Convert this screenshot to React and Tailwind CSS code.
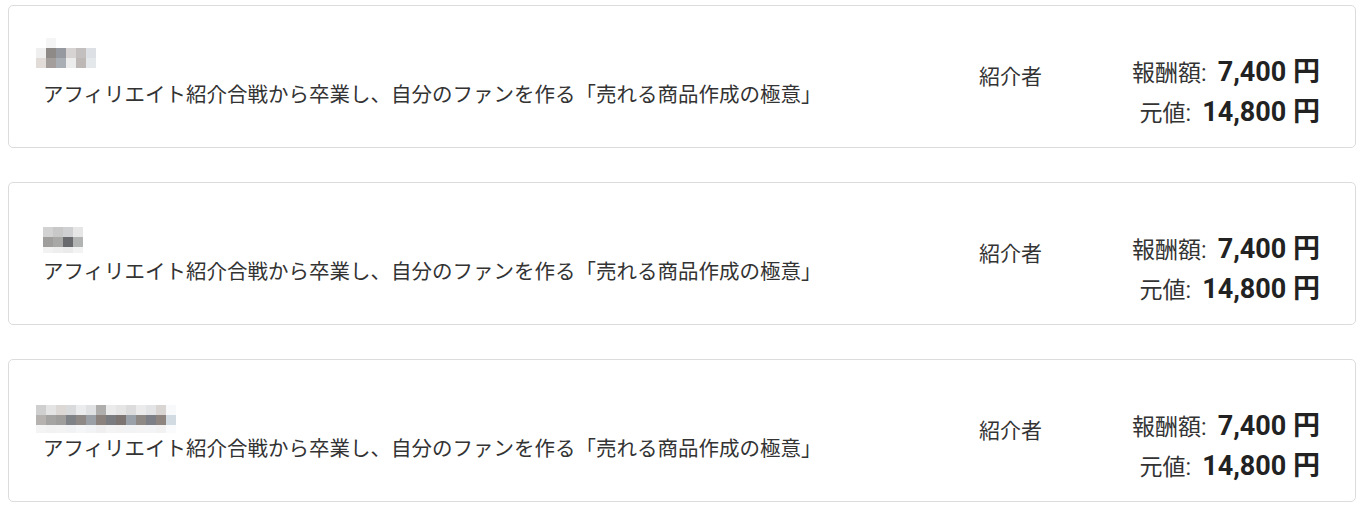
import React from "react";

const TITLE = "アフィリエイト紹介合戦から卒業し、自分のファンを作る「売れる商品作成の極意」";

function Mosaic({ rows, size = 10 }) {
  const width = Math.max(...rows.map((r) => r.cells.length + (r.offset || 0))) * size;
  const height = rows.reduce((s, r) => s + r.h, 0);
  let y = 0;
  return (
    <svg width={width} height={height} viewBox={`0 0 ${width} ${height}`} className="block">
      {rows.map((r, ri) => {
        const top = y;
        y += r.h;
        return r.cells.map((c, ci) =>
          c ? (
            <rect key={`${ri}-${ci}`} x={((r.offset || 0) + ci) * size} y={top} width={size} height={r.h} fill={c} />
          ) : null
        );
      })}
    </svg>
  );
}

const cards = [
  {
    mosaicClass: "mt-[32px] ml-0",
    rows: [
      { h: 10, cells: [null, "#f5f5f5"] },
      { h: 10, cells: ["#f0efef", "#8e8a88", "#969aa0", "#d6d3d2", "#c3bfbe", "#dde1e5"] },
      { h: 10, cells: ["#e2dcd8", "#a39e9b", "#a9aeb5", "#ececec", "#bdb8b6", "#e5e8ea"] },
    ],
    textClass: "mt-[9px]",
  },
  {
    mosaicClass: "mt-[44px] ml-[7px]",
    rows: [
      { h: 10, cells: ["#d2d2d2", "#c8c8c8", "#cfd0d2", "#e6e6e6"] },
      { h: 10, cells: ["#a09e9c", "#a8a8a6", "#686a6e", "#b2b3b3"] },
      { h: 6, cells: ["#f2f2f2", "#eeeeee", "#ebebeb", "#f3f3f3"] },
    ],
    textClass: "mt-[1px]",
  },
  {
    mosaicClass: "mt-[45px] ml-0",
    rows: [
      {
        h: 10,
        cells: ["#cfcfcf", "#e4e4e4", "#dcd8d6", "#d8dadc", "#eaecee", "#dfe1e3", "#b0aeac", "#ebebeb", "#e5e5e5", "#dcdcdc", "#ebebeb", "#e2e4e6", "#d8d5d3", "#f7f9fb"],
      },
      {
        h: 10,
        cells: ["#b6b2b0", "#a6a4a2", "#9f9e9c", "#7f8388", "#8e8986", "#9aa0a6", "#8b827d", "#7a7c80", "#7c7571", "#9aa1a8", "#8e8985", "#7d8187", "#8f8580", "#d3dbe2"],
      },
      {
        h: 8,
        cells: ["#f4f4f4", "#f2f2f2", "#f3f3f3", "#f1f2f3", "#f5f6f7", "#f2f3f4", "#efefef", "#f4f4f4", "#f3f3f3", "#f2f3f4", "#f4f4f4", "#f3f4f5", "#f2f2f2", "#fafbfc"],
      },
    ],
    textClass: "mt-[-2px]",
  },
];

function Card({ c }) {
  return (
    <div className="box-border flex h-[143px] w-[1348px] items-start rounded-[5px] border border-[#dcdcdc] bg-white pl-[27px] pr-[35px]">
      <div className="flex flex-1 flex-col">
        <div className={c.mosaicClass}>
          <Mosaic rows={c.rows} />
        </div>
        <div className={`${c.textClass} ml-[7px] whitespace-nowrap text-[20.5px] leading-[32px] text-[#333333]`}>
          {TITLE}
        </div>
      </div>
      <div className="mt-[53px] w-[141px] whitespace-nowrap text-[21px] leading-[32px] text-[#333333] [font-family:'Noto_Sans_CJK_JP',sans-serif]">
        紹介者
      </div>
      <div className="mt-[46px] flex w-[200px] flex-col items-end text-[#333333]">
        <div className="flex h-[40px] items-baseline whitespace-nowrap">
          <span className="text-[23px] [font-family:Roboto,'Noto_Sans_CJK_JP',sans-serif]">報酬額:</span>
          <span className="ml-[11px] text-[27px] font-bold text-[#222222] [font-family:Roboto,'Noto_Sans_CJK_JP',sans-serif]">
            7,400 円
          </span>
        </div>
        <div className="flex h-[40px] items-baseline whitespace-nowrap">
          <span className="text-[23px] [font-family:Roboto,'Noto_Sans_CJK_JP',sans-serif]">元値:</span>
          <span className="ml-[11px] text-[27px] font-bold text-[#222222] [font-family:Roboto,'Noto_Sans_CJK_JP',sans-serif]">
            14,800 円
          </span>
        </div>
      </div>
    </div>
  );
}

export default function App() {
  return (
    <div className="min-h-[529px] bg-white [font-family:'Noto_Sans_CJK_JP',sans-serif]">
      <div className="flex flex-col gap-[34px] pl-[8px] pt-[5px]">
        {cards.map((c, i) => (
          <Card key={i} c={c} />
        ))}
      </div>
    </div>
  );
}
